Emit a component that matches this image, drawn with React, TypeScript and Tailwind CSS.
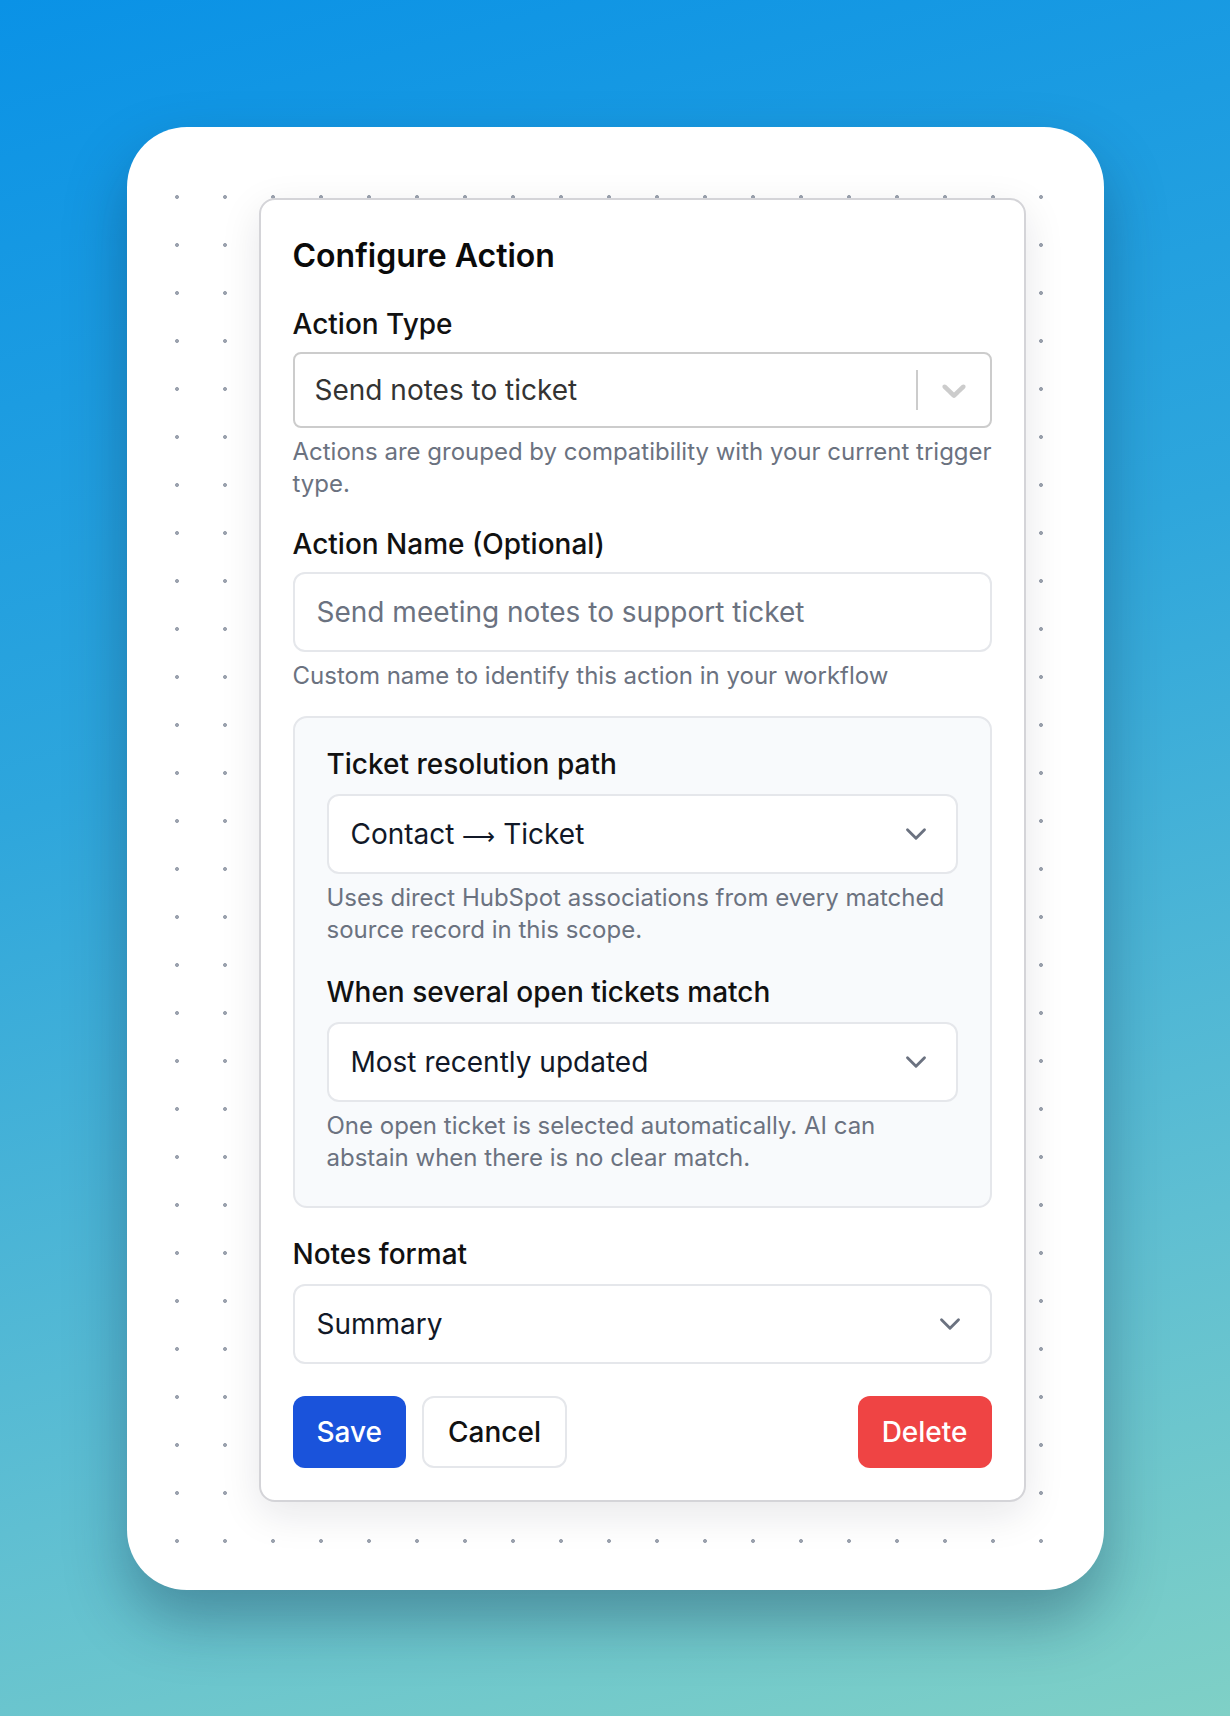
import React from 'react';
import { ChevronDown } from 'lucide-react';

function FieldLabel({ children }: { children: React.ReactNode }) {
  return <label className="block text-[28px] leading-[40px] font-medium text-[#111111]">{children}</label>;
}

function Help({ children, wide }: { children: React.ReactNode; wide?: boolean }) {
  return (
    <p className={`mt-2 text-[24px] leading-[32px] text-[#6b7280] ${wide ? '-mr-4' : ''}`}>{children}</p>
  );
}

function PlainSelect({ children }: { children: React.ReactNode }) {
  return (
    <div className="mt-[10px] flex h-[80px] items-center justify-between rounded-[12px] border-2 border-[#e5e7eb] bg-white pl-[22px] pr-[23px]">
      <span className="text-[28px] leading-[40px] text-[#111827]">{children}</span>
      <ChevronDown size={34} strokeWidth={2} className="text-[#6b7280]" />
    </div>
  );
}

export default function App() {
  return (
    <div className="flex h-[1716px] w-full items-center justify-center bg-[linear-gradient(165deg,#0a92e6_0%,#2ea6dc_40%,#5fbfd2_75%,#7fd0c6_100%)] font-['Inter',sans-serif]">
      {/* outer card */}
      <div className="h-[1463px] w-[977px] rounded-[60px] bg-white pl-[26px] pt-[46px] shadow-[0_30px_60px_rgba(15,40,70,0.35)]">
        {/* dotted canvas */}
        <div className="h-[1392px] w-[912px] bg-[radial-gradient(circle,#9ca3af_1.8px,transparent_2.2px)] bg-size-[48px_48px] bg-[length:48px_48px] pl-[106px] pt-[25px]">
          {/* dialog */}
          <div className="w-[767px] rounded-[16px] border-2 border-[#d4d4d8] bg-white p-8 shadow-[0_12px_40px_rgba(15,23,42,0.10)]">
            <h2 className="text-[32px] leading-[48px] font-semibold text-[#0a0a0a]">Configure Action</h2>

            <div className="mt-6">
              <FieldLabel>Action Type</FieldLabel>
              <div className="mt-2 flex h-[76px] items-stretch rounded-[8px] border-2 border-[#cccccc] bg-white">
                <div className="flex flex-1 items-center pl-[20px]">
                  <span className="text-[28px] leading-[40px] text-[#333333]">Send notes to ticket</span>
                </div>
                <span className="my-[16px] w-[2px] bg-[#cccccc]" />
                <div className="flex items-center px-[16px]">
                  <svg width="40" height="40" viewBox="0 0 20 20" fill="#cccccc">
                    <path d="M4.516 7.548c0.436-0.446 1.043-0.481 1.576 0l3.908 3.747 3.908-3.747c0.533-0.481 1.141-0.446 1.574 0 0.436 0.445 0.408 1.197 0 1.615-0.406 0.418-4.695 4.502-4.695 4.502-0.217 0.223-0.502 0.335-0.787 0.335s-0.57-0.112-0.789-0.335c0 0-4.287-4.084-4.695-4.502s-0.436-1.17 0-1.615z" />
                  </svg>
                </div>
              </div>
              <Help wide>Actions are grouped by compatibility with your current trigger type.</Help>
            </div>

            <div className="mt-6">
              <FieldLabel>Action Name (Optional)</FieldLabel>
              <div className="mt-2 flex h-[80px] items-center rounded-[12px] border-2 border-[#e5e7eb] bg-white pl-[22px]">
                <span className="text-[28px] leading-[40px] text-[#6b7280]">Send meeting notes to support ticket</span>
              </div>
              <Help>Custom name to identify this action in your workflow</Help>
            </div>

            {/* resolution group */}
            <div className="mt-6 rounded-[14px] border-2 border-[#e5e7eb] bg-[#f8fafc] px-8 pt-[26px] pb-8">
              <FieldLabel>Ticket resolution path</FieldLabel>
              <PlainSelect>
                Contact <span className="font-['DejaVu_Sans',sans-serif] font-extralight text-[23px] leading-none">⟶</span> Ticket
              </PlainSelect>
              <Help>Uses direct HubSpot associations from every matched source record in this scope.</Help>

              <div className="mt-[26px]">
                <FieldLabel>When several open tickets match</FieldLabel>
                <PlainSelect>Most recently updated</PlainSelect>
                <Help>One open ticket is selected automatically. AI can abstain when there is no clear match.</Help>
              </div>
            </div>

            <div className="mt-[26px]">
              <FieldLabel>Notes format</FieldLabel>
              <PlainSelect>Summary</PlainSelect>
            </div>

            <div className="mt-8 flex items-center">
              <button className="h-[72px] rounded-[12px] bg-[#1a53db] px-6 text-[28px] leading-[40px] font-medium text-white">
                Save
              </button>
              <button className="ml-4 h-[72px] rounded-[12px] border-2 border-[#e5e7eb] bg-white px-6 text-[28px] leading-[40px] font-medium text-[#111111]">
                Cancel
              </button>
              <button className="ml-auto h-[72px] rounded-[12px] bg-[#ef4444] px-6 text-[28px] leading-[40px] font-medium text-white">
                Delete
              </button>
            </div>
          </div>
        </div>
      </div>
    </div>
  );
}
